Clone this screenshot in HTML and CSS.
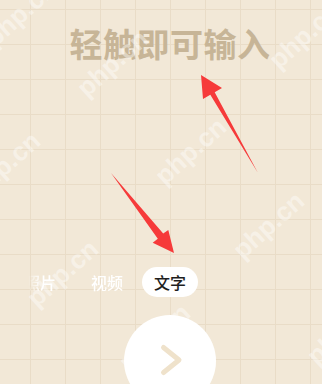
FILE: index.html
```html
<!DOCTYPE html>
<html lang="zh">
<head>
<meta charset="utf-8">
<link rel="stylesheet" href="styles.css">
</head>
<body>
<main class="screen">
  <h1 class="title">轻触即可输入</h1>
  <div class="tabs">
    <div class="tabs-left">
      <span class="tab">照片</span>
      <span class="tab">视频</span>
    </div>
    <span class="tab tab-active">文字</span>
    <div class="tabs-right"></div>
  </div>
  <button class="go" type="button" aria-label="next">
    <svg width="92" height="92" viewBox="0 0 92 92"><path d="M39.5 32.5 L55 45 L39.5 57.5" fill="none" stroke="#efe2cb" stroke-width="5" stroke-linecap="round" stroke-linejoin="round"/></svg>
  </button>

  <div class="wm" style="left:-22px;top:-2px">php.cn</div>
  <div class="wm" style="left:70px;top:48px">php.cn</div>
  <div class="wm" style="left:262px;top:20px">php.cn</div>
  <div class="wm" style="left:-38px;top:150px">php.cn</div>
  <div class="wm" style="left:148px;top:136px">php.cn</div>
  <div class="wm" style="left:226px;top:210px">php.cn</div>
  <div class="wm" style="left:20px;top:258px">php.cn</div>
  <div class="wm" style="left:112px;top:322px">php.cn</div>
  <div class="wm" style="left:300px;top:316px">php.cn</div>

  <svg class="arrows" width="322" height="384" viewBox="0 0 322 384">
    <polygon points="201,75 222,88 214.7,92.2 258,173 210.3,94.8 203,99" fill="#f63a3a"/>
    <polygon points="111,173 163.2,233.6 168.3,230 174,253 152.7,242.7 157.8,238.8" fill="#f63a3a"/>
  </svg>
</main>
</body>
</html>
```

FILE: styles.css
```css
html, body {
  margin: 0;
  padding: 0;
}
body {
  width: 322px;
  height: 384px;
  overflow: hidden;
  font-family: "Noto Sans CJK SC", "Noto Sans", sans-serif;
}
.screen {
  position: relative;
  box-sizing: border-box;
  width: 322px;
  height: 384px;
  overflow: hidden;
  padding-left: 18px;
  display: flex;
  flex-direction: column;
  align-items: center;
  background-color: #f2e8d7;
  background-image:
    linear-gradient(to right, #e9dcc7 1.5px, transparent 1.5px),
    linear-gradient(to bottom, #e9dcc7 1.5px, transparent 1.5px);
  background-size: 35px 35px;
  background-position: 30px 9px;
}
.title {
  margin: 27px 0 0;
  font-size: 33px;
  line-height: 33px;
  font-weight: 700;
  color: #c7b597;
  letter-spacing: 0.5px;
}
.tabs {
  margin-top: 207px;
  width: 100%;
  display: grid;
  grid-template-columns: minmax(0, 1fr) auto minmax(0, 1fr);
  align-items: center;
  height: 30px;
}
.tabs-left {
  display: flex;
  justify-content: flex-end;
  gap: 11px;
  padding-right: 7px;
  min-width: 0;
  -webkit-mask-image: linear-gradient(to right, transparent 10px, rgba(0,0,0,0.6) 18px, #000 24px);
  mask-image: linear-gradient(to right, transparent 10px, rgba(0,0,0,0.6) 18px, #000 24px);
}
.tab {
  flex: none;
  padding: 0 12px;
  font-size: 16px;
  line-height: 30px;
  font-weight: 500;
  color: #ffffff;
  white-space: nowrap;
}
.tab-active {
  background: #ffffff;
  color: #1e1e1e;
  border-radius: 15px;
  height: 30px;
}
.go {
  margin-top: 18px;
  width: 92px;
  height: 92px;
  flex: none;
  border: none;
  padding: 0;
  border-radius: 50%;
  background: #ffffff;
  display: block;
}
.go svg {
  display: block;
}
.wm {
  position: absolute;
  font-family: "Liberation Sans", "DejaVu Sans", sans-serif;
  font-weight: 700;
  font-size: 26px;
  color: rgba(255, 255, 255, 0.42);
  transform: rotate(-42deg);
  transform-origin: center;
  white-space: nowrap;
  pointer-events: none;
}
.arrows {
  position: absolute;
  left: 0;
  top: 0;
}
```
